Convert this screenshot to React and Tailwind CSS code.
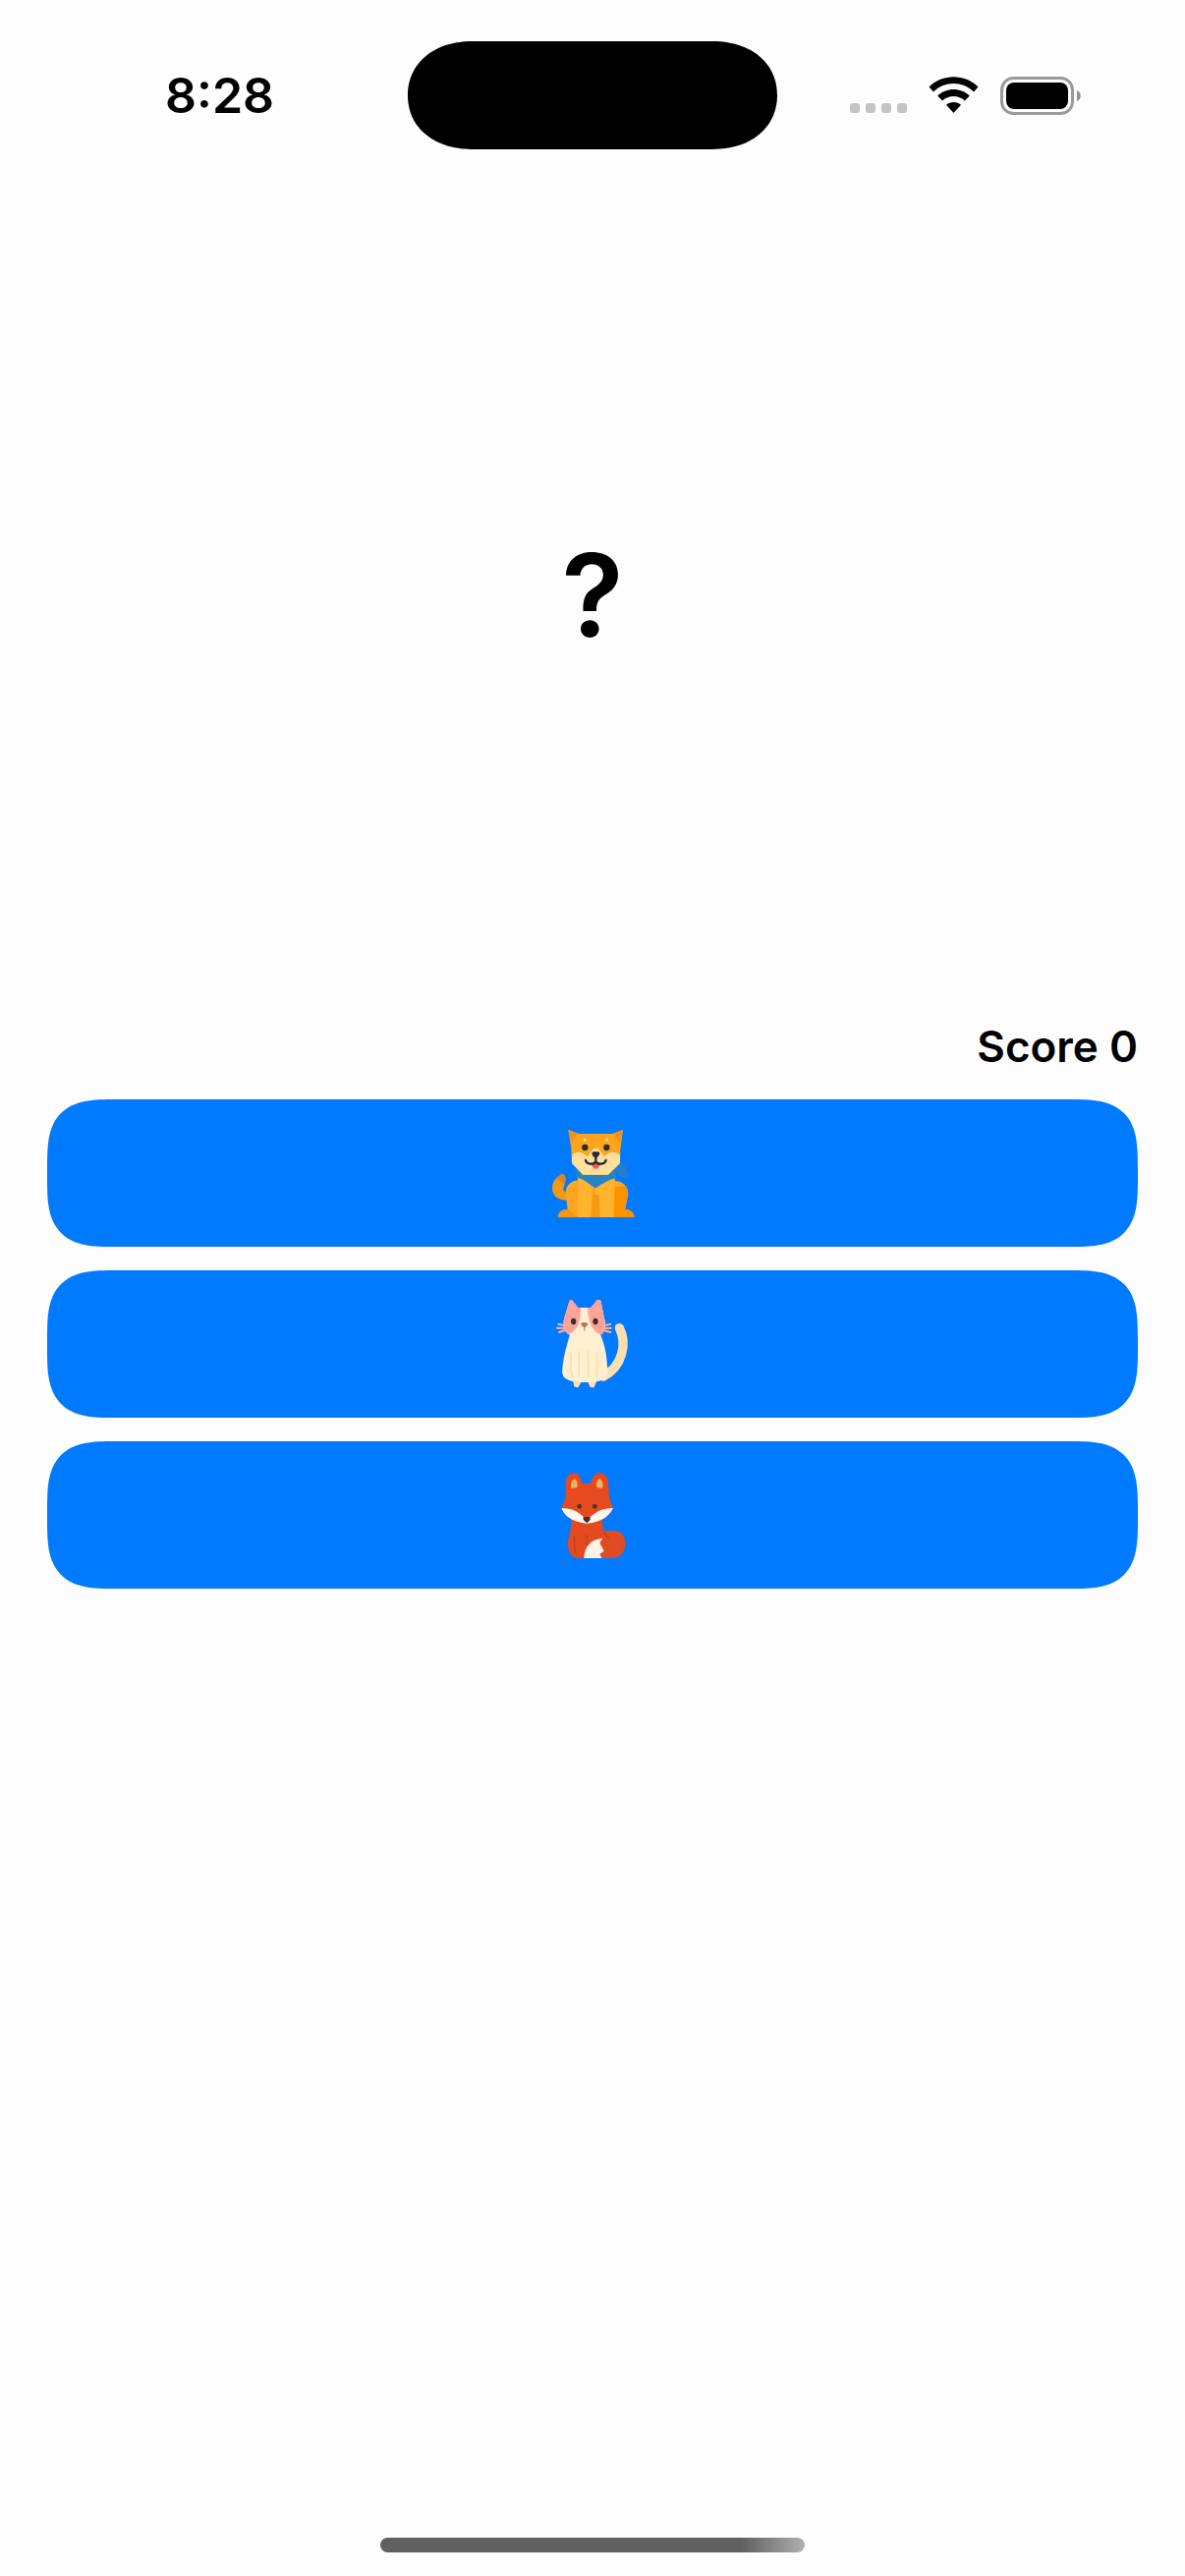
function WifiIcon() {
  return (
    <svg viewBox="0 0 51 38" className="h-[38px] w-[51px]" role="img" aria-label="Wi-Fi">
      <path d="M0.5 10.5 C14 -3.2 37 -3.2 50.5 10.5 L46 15.5 C34.500 4.200 16.500 4.200 5 15.500 Z" />
      <path d="M9.200 19.500 C18 10.700 33 10.700 41.800 19.500 L37 24.500 C30.500 18.500 20.500 18.500 14 24.500 Z" />
      <path d="M18 28.800 C22 25.200 29 25.200 33 28.800 L25.500 37 Z" />
    </svg>
  );
}

function BatteryIcon() {
  return (
    <svg viewBox="0 0 82 39" className="h-[39px] w-[82px]" role="img" aria-label="Battery full">
      <rect x="1.500" y="1.500" width="72" height="36" rx="12" fill="none" stroke="#9b9b99" strokeWidth="3" />
      <rect x="6" y="6" width="63" height="27" rx="8" />
      <path d="M78 14 C83 16 83 23 78 25 Z" fill="#8e8e90" />
    </svg>
  );
}

function DogIcon() {
  return (
    <svg viewBox="54 57 270 270" className="size-[90px]" aria-hidden="true">
      <path d="M94 194 C106 196 109 207 105 222 C101 236 96 245 106 249 L112 275 C85 276 65 260 66 236 C67 215 80 206 94 194 Z" fill="#f59a14" />
      <path d="M94 194 C106 196 109 207 104 224 C94 220 84 214 80 208 Z" fill="#d98324" />
      <path d="M139 184 L145 214 C119 217 106 234 107 255 L113 304 C95 302 84 312 84 328 L317 328 C315 311 303 303 288 304 L298 258 C299 234 282 216 257 216 L257 184 Z" fill="#ffa51f" />
      <path d="M145 205 L184 226 L196 328 L145 328 Z" fill="#ffb32e" />
      <path d="M196 236 L257 210 L254 328 L208 328 Z" fill="#ffb32e" />
      <path d="M188 258 L209 258 L212 328 L184 328 Z" fill="#f69a13" />
      <path d="M257 235 L292 231 L297 258 L288 304 C305 303 316 312 317 328 L254 328 Z" fill="#fc9200" />
      <path d="M84 328 C84 310 97 303 114 304 L145 328 Z" fill="#f9950b" />
      <path d="M254 177 L278 163 L299 163 L292 180 L300 206 L271 207 Z" fill="#207fcf" />
      <path d="M136 180 L258 180 L262 207 C237 211 221 225 198 238 C178 226 163 211 142 205 Z" fill="#2584c7" />
      <path d="M115 60 L148 72 L249 72 L282 60 L274 120 L273 162 L237 197 L160 197 L126 162 L124 115 Z" fill="#ffa41d" />
      <path d="M115 60 L144 71 L125 98 Z M282 60 L252 71 L273 101 Z" fill="#f39119" />
      <path d="M126 136 C140 124 158 126 174 142 L188 121 C194 115 204 115 210 121 L225 142 C240 125 259 124 273 137 L273 162 L237 197 L160 197 L126 162 Z" fill="#ffdf9c" />
      <path d="M162 84 L172 91 L163 97 Z M227 91 L236 83 L239 97 Z" fill="#ffd99a" />
      <circle cx="166" cy="114" r="9.500" fill="#272d33" />
      <circle cx="232" cy="114" r="9.500" fill="#272d33" />
      <path d="M187 132 Q187 127 193 127 H205 Q211 127 211 133 Q208 144 199 147 Q190 144 187 132 Z" fill="#272d33" />
      <path d="M187 164 H211 C210 184 188 184 187 164 Z" fill="#fb555c" />
      <path d="M168 153 C171 166 193 168 199 157 C205 168 227 166 230 153 M199 140 V158" fill="none" stroke="#272d33" strokeWidth="7" strokeLinecap="round" />
    </svg>
  );
}

function CatIcon() {
  return (
    <svg viewBox="54 57 270 270" className="size-[90px]" aria-hidden="true">
      <path d="M271 143 C295 190 281 260 222 291" fill="none" stroke="#fcdfb0" strokeWidth="28" strokeLinecap="round" />
      <path d="M122 156 L210 156 C232 204 233 240 235 274 C239 294 222 304 201 307 L193 325 L182 323 L176 309 L153 309 L145 325 L134 322 L130 306 C107 302 94 292 97 270 C100 229 111 194 122 156 Z" fill="#fff0d0" />
      <path d="M130 303 L153 309 L145 325 L134 322 Z M176 309 L201 306 L193 325 L182 323 Z" fill="#ffe0af" />
      <path d="M124 218 C121 251 122 276 128 296 M147 213 V292 M176 213 V292 M202 218 C204 254 205 276 201 294" fill="none" stroke="#fae1b7" strokeWidth="6" />
      <path d="M103 112 L118 62 Q123 54 130 62 L145 81 L184 81 L202 59 Q210 51 215 63 L224 110 C234 135 227 157 209 165 C183 177 145 177 122 166 C104 159 96 137 103 112 Z" fill="#fff0d0" />
      <path d="M103 112 L118 62 Q123 54 130 62 L145 81 L153 81 C152 116 150 146 117 163 C99 150 98 129 103 112 Z" fill="#ffa29a" />
      <path d="M184 81 L202 59 Q210 51 215 63 L224 110 C231 133 227 155 216 165 C184 151 176 120 174 82 Z" fill="#ffa29a" />
      <path d="M120 88 L125 72 L136 85 Z M195 85 L206 71 L211 91 Z" fill="#ffb7a8" />
      <path d="M85 131 L104 136 M81 143 L105 144 M87 156 L106 150 M244 131 L225 136 M246 143 L224 144 M244 156 L222 150" stroke="#ffb09c" strokeWidth="6" strokeLinecap="round" />
      <ellipse cx="131" cy="123" rx="8" ry="10" fill="#41292e" />
      <ellipse cx="198" cy="123" rx="8" ry="10" fill="#41292e" />
      <path d="M153 129 Q164 123 175 129 Q175 137 166 142 V152 H163 V142 Q154 137 153 129 Z" fill="#bd7254" />
    </svg>
  );
}

function FoxIcon() {
  return (
    <svg viewBox="54 51 270 270" className="size-[90px]" aria-hidden="true">
      <path d="M222 234 H255 C276 234 289 250 289 273 C289 301 273 318 246 318 L161 318 L190 245 Z" fill="#df4b22" />
      <path d="M126 195 L218 195 L224 259 L168 318 L137 318 C124 313 113 297 113 274 C113 260 119 255 120 244 Z" fill="#e44a20" />
      <path d="M134 250 V287 Q134 300 140 307 M171 246 V277 M225 237 Q228 252 243 257" fill="none" stroke="#bd4020" strokeWidth="4" />
      <path d="M163 318 C164 281 186 260 220 257 Q206 274 215 278 L224 296 L211 305 L217 318 Z" fill="#fff3e7" />
      <path d="M94 165 L108 133 L107 91 C107 64 126 53 143 61 Q151 65 157 90 L184 90 C189 63 204 53 220 60 C236 67 238 83 238 105 L240 133 L252 165 C243 187 220 207 171 212 C125 207 101 185 94 165 Z" fill="#e74a1f" />
      <path d="M124 105 C122 89 126 77 136 76 Q146 84 142 102 Z M202 102 C199 86 204 77 212 76 C221 82 223 95 219 105 Z" fill="#efb164" />
      <path d="M94 165 Q130 165 152 184 Q164 192 172 205 Q179 192 193 184 Q215 165 252 165 C239 190 218 208 171 212 C124 207 103 188 94 165 Z" fill="#fff8ef" />
      <ellipse cx="149" cy="160" rx="7" ry="7" fill="#4b3420" />
      <ellipse cx="196" cy="160" rx="7" ry="7" fill="#4b3420" />
      <path d="M161 192 H182 V201 L172 211 L161 201 Z" fill="#393527" />
    </svg>
  );
}

const choices = [
  { name: "Dog", Icon: DogIcon },
  { name: "Cat", Icon: CatIcon },
  { name: "Fox", Icon: FoxIcon },
];

export default function App() {
  return (
    <div className="flex min-h-screen flex-col bg-[#fdfdfd] font-['Inter',sans-serif] text-black">
      <header className="grid grid-cols-[minmax(0,1fr)_376px_minmax(0,1fr)] items-center pt-[42px]">
        <time className="pl-8 text-center text-[50px] leading-[60px] font-semibold">8:28</time>
        <div className="h-[110px] rounded-full bg-black supports-[corner-shape:round]:rounded-[66px/55px] supports-[corner-shape:round]:[corner-shape:superellipse(1.1)]" />
        <div className="flex items-center justify-end gap-[22px] pr-[106px]">
          <div className="flex shrink-0 gap-[6px] pt-[26px]">
            <span className="size-[10px] rounded-[3px] bg-[#c4c4c4]" />
            <span className="size-[10px] rounded-[3px] bg-[#c4c4c4]" />
            <span className="size-[10px] rounded-[3px] bg-[#c4c4c4]" />
            <span className="size-[10px] rounded-[3px] bg-[#c4c4c4]" />
          </div>
          <div className="shrink-0"><WifiIcon /></div>
          <div className="shrink-0"><BatteryIcon /></div>
        </div>
      </header>
      <main className="flex flex-1 flex-col px-12">
        <h1 className="mt-6 flex h-[859px] items-center justify-center text-[116px] font-semibold">?</h1>
        <p className="text-right text-[44px] leading-[60px] font-semibold">Score 0</p>
        <div className="mt-6 flex flex-col gap-6">
          {choices.map(({ name, Icon }) => (
            <button
              key={name}
              type="button"
              aria-label={name}
              className="flex h-[150px] w-full items-center justify-center rounded-[48px] bg-[#007aff] supports-[corner-shape:round]:rounded-[69px] supports-[corner-shape:round]:[corner-shape:superellipse(1.6)]"
            >
              <Icon />
            </button>
          ))}
        </div>
      </main>
      <footer className="flex justify-center pb-6">
        <div className="h-[15px] w-[432px] rounded-full bg-linear-to-r from-[#606060] from-85% to-[#b0b0b0]" />
      </footer>
    </div>
  );
}
